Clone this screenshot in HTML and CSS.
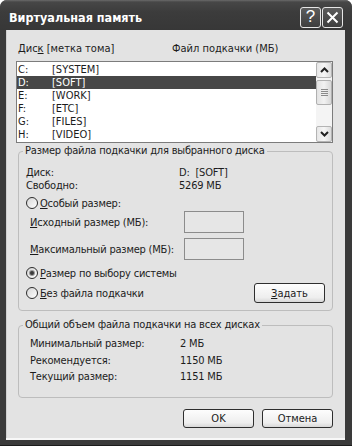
FILE: index.html
```html
<!DOCTYPE html>
<html lang="ru">
<head>
<meta charset="utf-8">
<title>Виртуальная память</title>
<link rel="stylesheet" href="styles.css">
</head>
<body>
<div class="window">
  <div class="titlebar">
    <span class="title">Виртуальная память</span>
    <span class="tbtn help">?</span>
    <span class="tbtn close"><svg width="13" height="13" viewBox="0 0 13 13"><path d="M1.5 1.5 L11.5 11.5 M11.5 1.5 L1.5 11.5" stroke="#fff" stroke-width="2" fill="none"/></svg></span>
  </div>
  <div class="client">
    <div class="cols"><span class="c1">Дис<u>к</u> [метка тома]</span><span>Файл подкачки (МБ)</span></div>
    <div class="listbox">
      <div class="rows">
        <div class="row"><span class="drv">C:</span><span>[SYSTEM]</span></div>
        <div class="row sel"><span class="drv">D:</span><span>[SOFT]</span></div>
        <div class="row"><span class="drv">E:</span><span>[WORK]</span></div>
        <div class="row"><span class="drv">F:</span><span>[ETC]</span></div>
        <div class="row"><span class="drv">G:</span><span>[FILES]</span></div>
        <div class="row"><span class="drv">H:</span><span>[VIDEO]</span></div>
      </div>
      <div class="sb">
        <div class="sbtn"><svg width="9" height="6" viewBox="0 0 9 6"><path d="M1 5 L4.5 1.5 L8 5" stroke="#222" stroke-width="2" fill="none"/></svg></div>
        <div class="thumb"><span class="grip"></span><span class="grip"></span><span class="grip"></span><span class="grip"></span></div>
        <div class="track"></div>
        <div class="sbtn"><svg width="9" height="6" viewBox="0 0 9 6"><path d="M1 1 L4.5 4.5 L8 1" stroke="#222" stroke-width="2" fill="none"/></svg></div>
      </div>
    </div>

    <fieldset class="group g1">
      <legend>Размер файла подкачки для выбранного диска</legend>
      <div class="info first"><span class="k">Диск:</span><span>D:&nbsp; [SOFT]</span></div>
      <div class="info"><span class="k">Свободно:</span><span>5269 МБ</span></div>
      <div class="radio r1"><span class="rb"></span><span><u>О</u>собый размер:</span></div>
      <div class="inrow"><span class="ik"><u>И</u>сходный размер (МБ):</span><span class="inp"></span></div>
      <div class="inrow r2"><span class="ik"><u>М</u>аксимальный размер (МБ):</span><span class="inp"></span></div>
      <div class="radio r2"><span class="rb on"></span><span><u>Р</u>азмер по выбору системы</span></div>
      <div class="radio last"><span class="rb"></span><span><u>Б</u>ез файла подкачки</span><span class="btn set"><u>З</u>адать</span></div>
    </fieldset>

    <fieldset class="group g2">
      <legend>Общий объем файла подкачки на всех дисках</legend>
      <div class="tot first"><span class="k2">Минимальный размер:</span><span>2 МБ</span></div>
      <div class="tot"><span class="k2">Рекомендуется:</span><span>1150 МБ</span></div>
      <div class="tot"><span class="k2">Текущий размер:</span><span>1151 МБ</span></div>
    </fieldset>

    <div class="footer">
      <span class="btn">OK</span>
      <span class="btn">Отмена</span>
    </div>
  </div>
</div>
</body>
</html>
```
FILE: styles.css
```css
html, body {
  margin: 0;
  padding: 0;
  background: #ffffff;
}
body {
  width: 352px;
  height: 446px;
  overflow: hidden;
  font-family: "DejaVu Sans Condensed", "DejaVu Sans", "Liberation Sans", sans-serif;
  font-size: 11px;
  color: #1c1c1c;
  white-space: nowrap;
}
u { text-decoration: underline; text-underline-offset: 1px; }

.window {
  height: 446px;
  box-sizing: border-box;
  background: #3a3a3a;
  border-radius: 7px 7px 0 0;
  display: flex;
  flex-direction: column;
  border-bottom: 1px solid #1c1c1c;
}

.titlebar {
  height: 30px;
  box-sizing: border-box;
  padding: 4px 9px 0 9px;
  display: flex;
  align-items: center;
  gap: 1px;
  border-radius: 7px 7px 0 0;
  background: linear-gradient(#6a6a6a 0, #474747 2px, #3c3c3c 40%, #373737 100%);
}
.title {
  flex: 1;
  color: #ffffff;
  font-weight: bold;
  font-size: 12.5px;
}
.tbtn {
  width: 21px;
  height: 21px;
  box-sizing: border-box;
  border: 1px solid #e6e6e6;
  border-radius: 3px;
  background: linear-gradient(#5c5c5c, #3e3e3e);
  color: #ffffff;
  display: flex;
  align-items: center;
  justify-content: center;
}
.help {
  font-family: "Liberation Sans", Arial, sans-serif;
  font-size: 17px;
}

.client {
  flex: 1;
  margin: 0 7px 5px 6px;
  background: #e3e3e3;
  padding: 12px 12px 0 10px;
  box-shadow: inset 0 -2px 0 #f8f8f8, inset 1px 0 0 #cfcfcf;
  display: flex;
  flex-direction: column;
}

.cols {
  display: flex;
  line-height: 14px;
  padding-left: 2px;
}
.c1 { width: 154px; }

.listbox {
  margin-top: 5px;
  height: 82px;
  box-sizing: border-box;
  border: 1px solid #7c7c7c;
  background: #ffffff;
  display: flex;
}
.rows {
  flex: 1;
  overflow: hidden;
  padding-top: 0.5px;
}
.row {
  height: 13px;
  line-height: 13px;
  display: flex;
}
.row.sel {
  background-color: #474747;
  color: #ffffff;
}
.drv {
  width: 34px;
  padding-left: 1px;
}

.sb {
  width: 16px;
  display: flex;
  flex-direction: column;
  background: #f4f4f4;
}
.sbtn {
  height: 16px;
  box-sizing: border-box;
  border: 1px solid #b4b4b4;
  border-radius: 2px;
  background: linear-gradient(90deg, #e6e6e6, #f6f6f6 50%, #dcdcdc);
  display: flex;
  align-items: center;
  justify-content: center;
}
.thumb {
  height: 25px;
  margin-top: 2px;
  box-sizing: border-box;
  border: 1px solid #b0b0b0;
  border-radius: 2px;
  background: linear-gradient(90deg, #e2e2e2, #f2f2f2 50%, #d8d8d8);
  display: flex;
  flex-direction: column;
  align-items: center;
  justify-content: center;
  gap: 1px;
}
.grip {
  width: 7px;
  height: 1px;
  background: #8a8a8a;
}
.track { flex: 1; }

.group {
  margin: 1px 0 0 2px;
  padding: 0 7px 7px 7px;
  border: 1px solid #bdbdbd;
  border-radius: 4px;
  min-width: 0;
  letter-spacing: -0.2px;
}
.group legend {
  margin-left: -3px;
  padding: 0 2px;
  line-height: 14px;
}

.info {
  display: flex;
  line-height: 13px;
}
.info.first { margin-top: 7.5px; }
.k { width: 153px; }

.radio {
  display: flex;
  align-items: center;
  height: 16px;
}
.radio.r1 { margin-top: 3.5px; }
.radio.r2 { margin-top: 5px; }
.radio.last { margin-top: 2px; height: 20px; }
.rb {
  width: 12px;
  height: 12px;
  box-sizing: border-box;
  border: 1px solid #2c2c2c;
  border-radius: 50%;
  background: linear-gradient(135deg, #d6d6d6, #ffffff);
  margin-right: 2px;
  display: flex;
  align-items: center;
  justify-content: center;
}
.rb.on::after {
  content: "";
  width: 4px;
  height: 4px;
  border-radius: 50%;
  background: #3c3c3c;
  box-shadow: 0 0 0 1px #9a9a9a;
}

.inrow {
  display: flex;
  align-items: center;
  height: 22px;
  padding-left: 4px;
}
.inrow.r2 { margin-top: 5px; }
.ik { width: 154px; }
.inp {
  width: 60px;
  height: 22px;
  box-sizing: border-box;
  border: 1px solid #8c8c8c;
  background: #e6e6e6;
}

.btn {
  width: 71px;
  height: 19px;
  box-sizing: border-box;
  border: 1px solid #2e2e2e;
  border-radius: 3px;
  background: linear-gradient(#fdfdfd, #eeeeee 75%, #d8d8d8);
  display: flex;
  align-items: center;
  justify-content: center;
  letter-spacing: 0;
}
.btn.set {
  margin-left: auto;
  height: 20px;
}

.g2 {
  margin-top: 7px;
  padding-bottom: 11.5px;
}
.tot {
  display: flex;
  line-height: 16.5px;
  padding-left: 4px;
}
.tot.first { margin-top: 4px; }
.k2 { width: 150px; }

.footer {
  margin-top: 11px;
  display: flex;
  justify-content: flex-end;
  gap: 8px;
}
```
